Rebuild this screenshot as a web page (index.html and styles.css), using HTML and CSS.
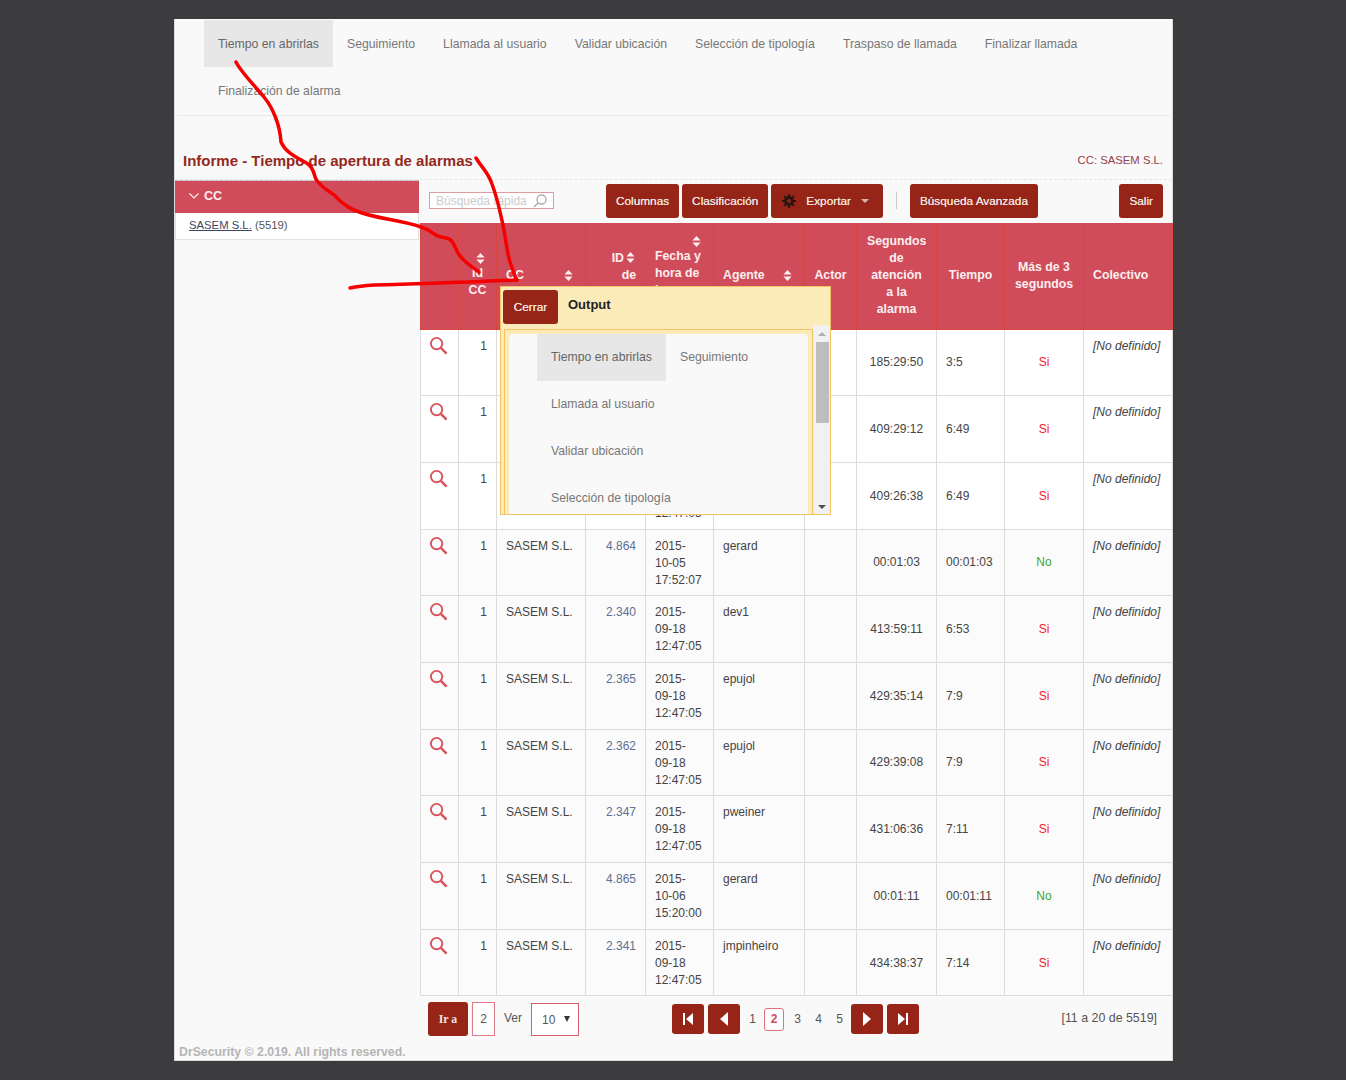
FILE: index.html
```html
<!DOCTYPE html>
<html>

<head>
    <meta charset="utf-8">
    <title>Informe - Tiempo de apertura de alarmas</title>
    <link rel="stylesheet" href="styles.css">
</head>

<body>
    <svg class="defs" width="0" height="0">
        <symbol id="sort" viewBox="0 0 10 12">
            <path d="M5 0l4.5 5h-9zM5 12L.5 7h9z" />
        </symbol>
        <symbol id="lens" viewBox="0 0 20 20">
            <circle cx="8" cy="8" r="6" fill="none" stroke="#d9525e" stroke-width="2" />
            <path d="M12.5 12.5l6 6" fill="none" stroke="#d9525e" stroke-width="2.6" />
        </symbol>
    </svg>

    <div class="window">
        <ul class="steps">
            <li class="active">Tiempo en abrirlas</li>
            <li>Seguimiento</li>
            <li>Llamada al usuario</li>
            <li>Validar ubicación</li>
            <li>Selección de tipología</li>
            <li>Traspaso de llamada</li>
            <li>Finalizar llamada</li>
            <li>Finalización de alarma</li>
        </ul>

        <div class="title-row">
            <h1>Informe - Tiempo de apertura de alarmas</h1>
            <span class="cc-name">CC: SASEM S.L.</span>
        </div>

        <div class="content">
            <div class="sidebar">
                <div class="side-head">
                    <svg class="chevron" width="10" height="6" viewBox="0 0 10 6"><path d="M.5.5L5 5 9.500.5" /></svg>
                    CC
                </div>
                <div class="side-item"><a href="#">SASEM S.L.</a> (5519)</div>
            </div>

            <div class="main">
                <div class="toolbar">
                    <div class="quick-search">
                        <span>Búsqueda rápida</span>
                        <svg width="14" height="14" viewBox="0 0 14 14"><circle cx="8.500" cy="5.500" r="4.500" /><path d="M5.200 8.800L1 13" /></svg>
                    </div>
                    <button class="btn">Columnas</button>
                    <button class="btn">Clasificación</button>
                    <button class="btn export">
                        <svg class="gear" width="14" height="14" viewBox="0 0 14 14"><circle cx="7" cy="7" r="3.500" fill="none" stroke="#2a1410" stroke-width="3" /><path d="M7 0v14M0 7h14M2 2l10 10M12 2L2 12" stroke="#2a1410" stroke-width="1.800" stroke-dasharray="2.500 9 2.500" /></svg>
                        Exportar
                        <i class="caret"></i>
                    </button>
                    <span class="divider"></span>
                    <button class="btn">Búsqueda Avanzada</button>
                    <button class="btn exit">Salir</button>
                </div>

                <table class="report">
                    <colgroup>
                        <col class="c-view"><col class="c-id"><col class="c-cc"><col class="c-alarm"><col class="c-date"><col class="c-agent"><col class="c-actor"><col class="c-secs"><col class="c-time"><col class="c-more"><col class="c-group">
                    </colgroup>
                    <thead>
                        <tr>
                            <th></th>
                            <th><svg class="sort block"><use href="#sort" /></svg>Id<br>CC</th>
                            <th class="left"><svg class="sort side"><use href="#sort" /></svg>CC</th>
                            <th class="right">ID<svg class="sort inline"><use href="#sort" /></svg><br>de<br>alarma</th>
                            <th class="left"><svg class="sort block end"><use href="#sort" /></svg>Fecha y hora de la alarma</th>
                            <th class="left"><svg class="sort side"><use href="#sort" /></svg>Agente</th>
                            <th>Actor</th>
                            <th class="narrow">Segundos de atención a la alarma</th>
                            <th>Tiempo</th>
                            <th>Más de 3 segundos</th>
                            <th class="left">Colectivo</th>
                        </tr>
                    </thead>
                    <tbody>
                        <tr>
                            <td><svg class="lens"><use href="#lens" /></svg></td><td class="num">1</td><td></td><td class="alarm"></td><td class="date"></td><td></td><td></td>
                            <td class="mid center">185:29:50</td><td class="mid">3:5</td><td class="mid center yes">Si</td><td class="group">[No definido]</td>
                        </tr>
                        <tr>
                            <td><svg class="lens"><use href="#lens" /></svg></td><td class="num">1</td><td></td><td class="alarm"></td><td class="date"></td><td></td><td></td>
                            <td class="mid center">409:29:12</td><td class="mid">6:49</td><td class="mid center yes">Si</td><td class="group">[No definido]</td>
                        </tr>
                        <tr>
                            <td><svg class="lens"><use href="#lens" /></svg></td><td class="num">1</td><td></td><td class="alarm"></td><td class="date">2015-09-18 12:47:05</td><td></td><td></td>
                            <td class="mid center">409:26:38</td><td class="mid">6:49</td><td class="mid center yes">Si</td><td class="group">[No definido]</td>
                        </tr>
                        <tr>
                            <td><svg class="lens"><use href="#lens" /></svg></td><td class="num">1</td><td>SASEM S.L.</td><td class="alarm">4.864</td><td class="date">2015-10-05 17:52:07</td><td>gerard</td><td></td>
                            <td class="mid center">00:01:03</td><td class="mid">00:01:03</td><td class="mid center no">No</td><td class="group">[No definido]</td>
                        </tr>
                        <tr>
                            <td><svg class="lens"><use href="#lens" /></svg></td><td class="num">1</td><td>SASEM S.L.</td><td class="alarm">2.340</td><td class="date">2015-09-18 12:47:05</td><td>dev1</td><td></td>
                            <td class="mid center">413:59:11</td><td class="mid">6:53</td><td class="mid center yes">Si</td><td class="group">[No definido]</td>
                        </tr>
                        <tr>
                            <td><svg class="lens"><use href="#lens" /></svg></td><td class="num">1</td><td>SASEM S.L.</td><td class="alarm">2.365</td><td class="date">2015-09-18 12:47:05</td><td>epujol</td><td></td>
                            <td class="mid center">429:35:14</td><td class="mid">7:9</td><td class="mid center yes">Si</td><td class="group">[No definido]</td>
                        </tr>
                        <tr>
                            <td><svg class="lens"><use href="#lens" /></svg></td><td class="num">1</td><td>SASEM S.L.</td><td class="alarm">2.362</td><td class="date">2015-09-18 12:47:05</td><td>epujol</td><td></td>
                            <td class="mid center">429:39:08</td><td class="mid">7:9</td><td class="mid center yes">Si</td><td class="group">[No definido]</td>
                        </tr>
                        <tr>
                            <td><svg class="lens"><use href="#lens" /></svg></td><td class="num">1</td><td>SASEM S.L.</td><td class="alarm">2.347</td><td class="date">2015-09-18 12:47:05</td><td>pweiner</td><td></td>
                            <td class="mid center">431:06:36</td><td class="mid">7:11</td><td class="mid center yes">Si</td><td class="group">[No definido]</td>
                        </tr>
                        <tr>
                            <td><svg class="lens"><use href="#lens" /></svg></td><td class="num">1</td><td>SASEM S.L.</td><td class="alarm">4.865</td><td class="date">2015-10-06 15:20:00</td><td>gerard</td><td></td>
                            <td class="mid center">00:01:11</td><td class="mid">00:01:11</td><td class="mid center no">No</td><td class="group">[No definido]</td>
                        </tr>
                        <tr>
                            <td><svg class="lens"><use href="#lens" /></svg></td><td class="num">1</td><td>SASEM S.L.</td><td class="alarm">2.341</td><td class="date">2015-09-18 12:47:05</td><td>jmpinheiro</td><td></td>
                            <td class="mid center">434:38:37</td><td class="mid">7:14</td><td class="mid center yes">Si</td><td class="group">[No definido]</td>
                        </tr>
                    </tbody>
                </table>

                <div class="pager">
                    <div class="goto">
                        <button class="btn go">Ir a</button>
                        <span class="page-input">2</span>
                        <span class="see">Ver</span>
                        <span class="page-size">10 <i></i></span>
                    </div>
                    <div class="pages">
                        <button class="btn nav"><svg width="12" height="14" viewBox="0 0 12 14"><path d="M1 1h2v12H1zM11 1v12L4 7z" /></svg></button>
                        <button class="btn nav"><svg width="12" height="14" viewBox="0 0 12 14"><path d="M10 0v14L2 7z" /></svg></button>
                        <span class="page">1</span>
                        <span class="page current">2</span>
                        <span class="page">3</span>
                        <span class="page">4</span>
                        <span class="page">5</span>
                        <button class="btn nav"><svg width="12" height="14" viewBox="0 0 12 14"><path d="M2 0v14l8-7z" /></svg></button>
                        <button class="btn nav"><svg width="12" height="14" viewBox="0 0 12 14"><path d="M1 1v12l7-6zM9 1h2v12H9z" /></svg></button>
                    </div>
                    <span class="total">[11 a 20 de 5519]</span>
                </div>
            </div>
        </div>

        <div class="copyright">DrSecurity © 2.019. All rights reserved.</div>
    </div>

    <!-- floating output window -->
    <div class="output">
        <div class="output-head">
            <button class="btn close">Cerrar</button>
            <strong>Output</strong>
        </div>
        <div class="output-body">
            <div class="output-frame">
                <ul class="steps inner">
                    <li class="active">Tiempo en abrirlas</li>
                    <li>Seguimiento</li>
                    <li>Llamada al usuario</li>
                    <li>Validar ubicación</li>
                    <li>Selección de tipología</li>
                </ul>
            </div>
            <div class="scrollbar">
                <i class="arrow up"></i>
                <div class="track"><div class="thumb"></div></div>
                <i class="arrow down"></i>
            </div>
        </div>
    </div>

    <!-- red pen marks on top of the screenshot -->
    <svg class="pen" width="1346" height="1080" viewBox="0 0 1346 1080">
        <path d="M236 62C241 72 254 85 264 97C273 108 280 125 281 142C286 153 296 157 308 164C316 170 313 178 318 182C326 192 332 191 338 199C347 207 352 210 362 213C380 219 405 221 421 227C432 230 434 236 441 237C450 238 452 240 455 247C458 255 463 261 479 272" />
        <path d="M476 158C482 168 488 172 492 184C498 200 500 212 503 225C506 240 507 252 510 262C513 270 514 275 517 280" />
        <path d="M350 288C355 287 360 286 374 285C420 284 470 282 517 280" />
    </svg>
</body>

</html>
```

FILE: styles.css
```css
* {
    box-sizing: border-box;
}

html,
body {
    height: 100%;
}

body {
    margin: 0;
    padding: 19px 0 0 174px;
    position: relative;
    overflow: hidden;
    background: #3c3c3e;
    font-family: "Liberation Sans", Arial, sans-serif;
    font-size: 12px;
    color: #333;
}

.defs {
    display: block;
    height: 0;
}

button {
    font-family: inherit;
}

.window {
    width: 999px;
    height: 1042px;
    padding-top: 1px;
    background: #f9f9f9;
    border: 1px solid #dcdcdc;
    border-top-width: 0;
}

/* step menu */
.steps {
    display: flex;
    flex-wrap: wrap;
    align-content: flex-start;
    margin: 0;
    padding: 0 0 0 29px;
    height: 96px;
    list-style: none;
    border-bottom: 1px solid #eaeaea;
    border-radius: 0 0 4px 4px;
}

.steps li {
    height: 47px;
    padding: 0 14px;
    line-height: 49px;
    font-size: 12.250px;
    color: #777;
}

.steps li.active {
    background: #e7e7e7;
    color: #666;
}

/* title */
.title-row {
    display: flex;
    justify-content: space-between;
    align-items: flex-end;
    height: 64px;
    padding: 0 9px 0 8px;
    border-bottom: 1px dashed #e6e6e6;
}

.title-row h1 {
    margin: 0 0 9px;
    font-size: 15px;
    line-height: 18px;
    color: #93281c;
}

.cc-name {
    margin-bottom: 13px;
    font-size: 11.300px;
    color: #93414a;
}

.content {
    display: flex;
    gap: 1px;
}

/* left column */
.sidebar {
    width: 244px;
    flex: none;
}

.side-head {
    display: flex;
    align-items: center;
    gap: 5px;
    height: 33px;
    padding: 0 0 2px 14px;
    background: #d14c5a;
    border-top: 1px solid #c9c9c9;
    font-size: 12.500px;
    font-weight: bold;
    color: #fbeff0;
}

.chevron {
    fill: none;
    stroke: #fbeff0;
    stroke-width: 1.200;
}

.side-item {
    height: 27px;
    padding-left: 13px;
    line-height: 25px;
    background: #fff;
    border: 1px solid #e2e2e2;
    border-top-width: 0;
    font-size: 11.300px;
    color: #555;
}

.side-item a {
    color: #3f4560;
}

.main {
    width: 752px;
    flex: none;
}

/* toolbar */
.toolbar {
    display: flex;
    align-items: center;
    height: 43px;
    padding: 0 9px 2px;
}

.btn {
    height: 34px;
    padding: 0 10px;
    margin-right: 3px;
    background: #962518;
    border: 0;
    border-radius: 3px;
    font-size: 11.800px;
    color: #f1e2df;
    text-shadow: 0 0 .6px #f1e2df;
}

.quick-search {
    display: flex;
    justify-content: space-between;
    align-items: center;
    width: 125px;
    height: 17px;
    margin-right: 52px;
    padding: 0 6px;
    background: #fff;
    border: 1px solid #e29aa2;
    color: #ccc;
}

.quick-search svg {
    fill: none;
    stroke: #aaa;
    stroke-width: 1.300;
}

.export {
    display: flex;
    align-items: center;
    gap: 10px;
    padding: 0 14px 0 11px;
    margin-right: 0;
}

.caret {
    border: 4px solid transparent;
    border-top-color: #d9b3ad;
    border-bottom-width: 0;
}

.divider {
    width: 1px;
    height: 17px;
    margin: 0 13px;
    background: #c9c9c9;
}

.exit {
    margin: 0 0 0 auto;
}

/* report table */
.report {
    width: 752px;
    border-collapse: collapse;
    table-layout: fixed;
}

.c-view { width: 38px; }
.c-id { width: 38px; }
.c-cc { width: 89px; }
.c-alarm { width: 60px; }
.c-date { width: 68px; }
.c-agent { width: 91px; }
.c-actor { width: 52px; }
.c-secs { width: 80px; }
.c-time { width: 68px; }
.c-more { width: 79px; }
.c-group { width: 89px; }

.report th {
    height: 106px;
    padding: 0 9px;
    background: #d14c5a;
    border: 1px solid #d8473f;
    border-top-width: 0;
    line-height: 17px;
    font-size: 12.300px;
    color: #fbeff0;
    text-align: center;
}

.report th.left {
    text-align: left;
}

.report th.right {
    text-align: right;
}

.report th.narrow {
    padding: 0 10px;
}

.sort {
    width: 9px;
    height: 11px;
    fill: #fbeff0;
    vertical-align: -1px;
}

.sort.block {
    display: block;
    margin: 0 0 1px 8px;
}

.sort.block.end {
    margin: 0 3px 1px auto;
}

.sort.side {
    float: right;
    margin: 3px 3px 0 0;
}

.sort.inline {
    margin: 0 1px 0 2px;
}

.report td {
    height: 66.700px;
    padding: 8px 9px 0;
    vertical-align: top;
    background: #fff;
    border: 1px solid #dcdcdc;
    line-height: 17px;
    color: #444;
}

.report tbody tr:nth-child(n+4) td {
    background: #fbfbfb;
}

.report td.num {
    text-align: right;
    padding-right: 9px;
}

.report td.alarm {
    text-align: right;
    color: #5f6f8f;
}

.report td.date {
    padding-right: 14px;
}

.report td.mid {
    padding-top: 1px;
    vertical-align: middle;
}

.report td.center {
    text-align: center;
}

.report td.group {
    padding-right: 0;
    font-style: italic;
    white-space: nowrap;
}

.yes {
    color: #f3222f !important;
}

.no {
    color: #3fa52e !important;
}

.lens {
    display: block;
    width: 19px;
    height: 19px;
    margin-left: -1px;
    margin-top: -2px;
}

/* pager */
.pager {
    display: flex;
    align-items: flex-start;
    padding: 6px 15px 0 8px;
}

.goto {
    display: flex;
    align-items: flex-start;
    width: 244px;
}

.go {
    width: 40px;
    padding: 0;
    margin-right: 4px;
    font-family: "Liberation Serif", serif;
    font-weight: bold;
    text-shadow: none;
}

.page-input {
    width: 23px;
    height: 34px;
    line-height: 32px;
    text-align: center;
    background: #fff;
    border: 1px solid #dd7b86;
    color: #555;
}

.see {
    margin: 9px 9px 0 9px;
    color: #555;
}

.page-size {
    display: flex;
    justify-content: space-between;
    align-items: center;
    width: 48px;
    height: 33px;
    margin-top: 1px;
    padding: 0 8px 0 10px;
    background: #fff;
    border: 1px solid #d9606d;
    color: #555;
}

.page-size i {
    margin-bottom: 2px;
    border: 3.500px solid transparent;
    border-top: 6px solid #333;
    border-bottom-width: 0;
}

.pages {
    display: flex;
    align-items: center;
    margin-top: 2px;
}

.nav {
    display: flex;
    align-items: center;
    justify-content: center;
    width: 32px;
    height: 30px;
    padding: 0;
    margin-right: 4px;
}

.nav svg {
    fill: #fff;
}

.page {
    width: 21px;
    text-align: center;
    color: #555;
}

.page:nth-of-type(1) {
    margin-left: -2px;
}

.page:last-of-type {
    margin-right: 1px;
}

.page.current {
    width: 20px;
    height: 23px;
    margin: 0 3px 0 1px;
    line-height: 21px;
    background: #fff;
    border: 1px solid #e2707c;
    border-radius: 3px;
    font-weight: bold;
    color: #d14c5a;
}

.total {
    margin: 9px 0 0 auto;
    font-size: 12.400px;
    color: #555;
}

.copyright {
    margin-top: 9px;
    padding-left: 4px;
    font-size: 12.300px;
    font-weight: bold;
    color: #b5b5b5;
}

/* floating window */
.output {
    position: absolute;
    left: 500px;
    top: 286px;
    width: 331px;
    height: 229px;
    overflow: hidden;
    background: #faebb9;
    border: 1px solid #f3c368;
}

.output-head {
    display: flex;
    align-items: flex-start;
    gap: 10px;
    height: 42px;
    padding: 3px 0 0 2px;
}

.output-head strong {
    margin-top: 7px;
    font-size: 13px;
    color: #222;
}

.close {
    width: 55px;
    padding: 0;
    margin: 0;
}

.output-body {
    display: flex;
    align-items: flex-start;
    padding-left: 3px;
    height: 190px;
}

.output-frame {
    flex: none;
    width: 309px;
    height: 190px;
    padding: 4px 4px 0;
    overflow: hidden;
    background: #faebb9;
    border: 1px solid #f3c368;
    border-bottom-width: 0;
}

.steps.inner {
    height: auto;
    min-height: 200px;
    padding: 0 40px 0 28px;
    background: #f9f9f9;
    border: 0;
    border-radius: 4px;
}

.steps.inner li {
    line-height: 47px;
}

.scrollbar {
    display: flex;
    flex-direction: column;
    align-items: center;
    width: 16px;
    height: 190px;
    margin: -4px 0 0 1px;
    background: #f1f1f1;
}

.track {
    flex: 1;
    width: 13px;
}

.thumb {
    height: 81px;
    background: #bdbdbd;
}

.arrow {
    flex: none;
    margin: 6px 0;
    border: 4px solid transparent;
}

.arrow.up {
    margin-top: 7px;
    border-bottom-color: #b0b0b0;
    border-top-width: 0;
}

.arrow.down {
    border-top-color: #505050;
    border-bottom-width: 0;
}

/* pen marks */
.pen {
    position: absolute;
    left: 0;
    top: 0;
    pointer-events: none;
    fill: none;
    stroke: #f50000;
    stroke-width: 3.500;
    stroke-linecap: round;
    stroke-linejoin: round;
}
```
